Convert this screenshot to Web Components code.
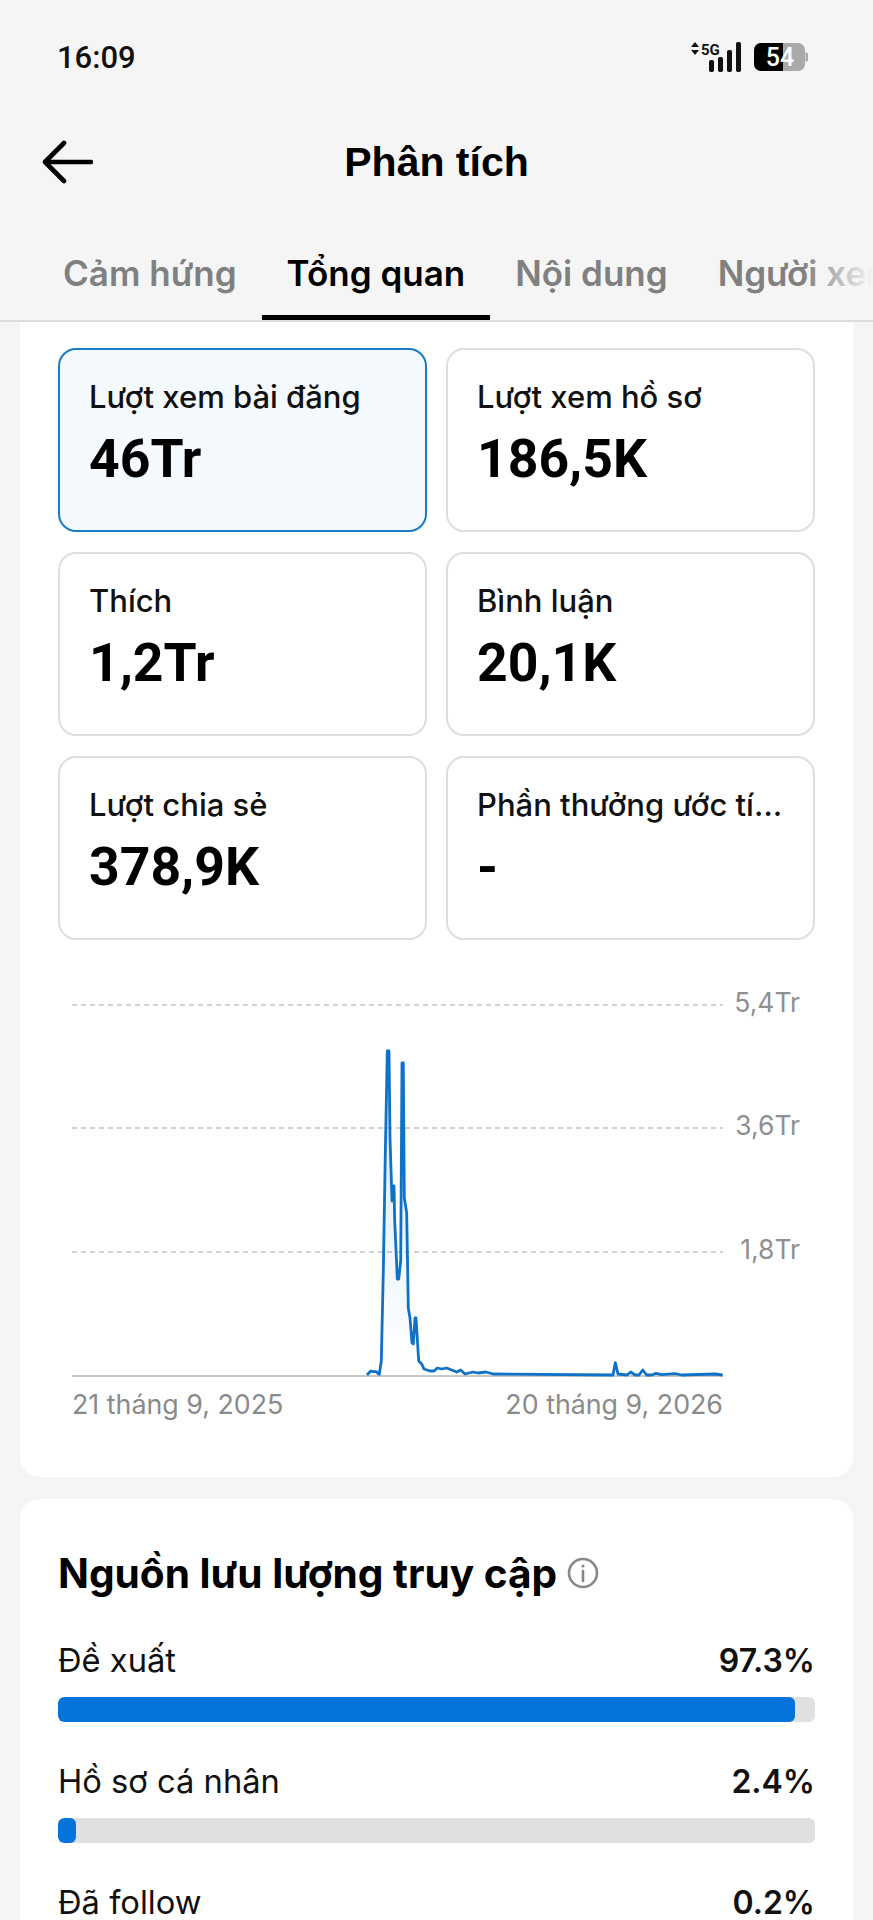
<!DOCTYPE html>
<html lang="vi">
<head>
<meta charset="utf-8">
<title>Phân tích</title>
<style>
  html, body { margin: 0; background: #f5f5f5; }
  body { height: 1920px; overflow: hidden; font-family: Inter, "Liberation Sans", sans-serif; color: #000; }
</style>
</head>
<body>
<analytics-page>
  <status-bar slot="top"></status-bar>
  <title-bar slot="top">Phân tích</title-bar>
  <tab-bar slot="top" tabs="Cảm hứng|Tổng quan|Nội dung|Người xem" active="1"></tab-bar>

  <panel-card class="first">
    <div style="display:grid;grid-template-columns:369px 369px;gap:20px 19px;padding:0 38px">
      <stat-tile label="Lượt xem bài đăng" value="46Tr" selected></stat-tile>
      <stat-tile label="Lượt xem hồ sơ" value="186,5K"></stat-tile>
      <stat-tile label="Thích" value="1,2Tr"></stat-tile>
      <stat-tile label="Bình luận" value="20,1K"></stat-tile>
      <stat-tile label="Lượt chia sẻ" value="378,9K"></stat-tile>
      <stat-tile label="Phần thưởng ước tính" value="-"></stat-tile>
    </div>
    <views-chart></views-chart>
  </panel-card>

  <panel-card>
    <traffic-list heading="Nguồn lưu lượng truy cập">
      <traffic-row label="Đề xuất" value="97.3%" fill="97.3"></traffic-row>
      <traffic-row label="Hồ sơ cá nhân" value="2.4%" fill="2.4"></traffic-row>
      <traffic-row label="Đã follow" value="0.2%" fill="0.2"></traffic-row>
    </traffic-list>
  </panel-card>
</analytics-page>

<script>
class AnalyticsPage extends HTMLElement {
  constructor() {
    super();
    this.attachShadow({ mode: 'open' }).innerHTML = `
      <style>
        :host { display: block; }
        .top { display: block; }
        .body { display: flex; flex-direction: column; gap: 22px; padding: 0 20px; }
      </style>
      <div class="top"><slot name="top"></slot></div>
      <div class="body"><slot></slot></div>`;
  }
}
customElements.define('analytics-page', AnalyticsPage);

class StatusBar extends HTMLElement {
  constructor() {
    super();
    this.attachShadow({ mode: 'open' }).innerHTML = `
      <style>
        :host { display: flex; justify-content: space-between; align-items: center; height: 114px; padding: 0 65px 0 57px; box-sizing: border-box; }
        .time { font: 500 31px/1 Roboto, "Liberation Sans", sans-serif; color: #111; }
        .right { display: flex; align-items: center; gap: 13px; }
        .battery { position: relative; width: 54px; height: 28px; }
        .level { position: absolute; inset: 0 2px 0 0; display: flex; align-items: center; justify-content: center; font: 500 25px/1 Roboto, sans-serif; color: #fff; }
      </style>
      <span class="time">16:09</span>
      <span class="right">
        <svg width="50" height="30" viewBox="0 0 50 30">
          <path d="M0 5 L4 0 L8 5Z M0 8 L8 8 L4 13Z" fill="#111"/>
          <text x="10" y="12.5" font-family="Roboto, sans-serif" font-size="15" font-weight="700" fill="#111">5G</text>
          <g fill="#111">
            <rect x="18" y="18" width="5" height="12" rx="1.8"/>
            <rect x="27" y="15" width="5" height="15" rx="1.8"/>
            <rect x="36" y="8" width="5" height="22" rx="1.8"/>
            <rect x="45" y="0" width="5" height="30" rx="1.8"/>
          </g>
        </svg>
        <span class="battery">
          <svg width="54" height="28" viewBox="0 0 54 28" style="display:block">
            <rect x="0" y="0" width="51" height="28" rx="7" fill="#a9a9a9"/>
            <path d="M7 0 H29 V28 H7 A7 7 0 0 1 0 21 V7 A7 7 0 0 1 7 0Z" fill="#000"/>
            <path d="M51.500 9 a3 5 0 0 1 0 10Z" fill="#a9a9a9"/>
          </svg>
          <span class="level">54</span>
        </span>
      </span>`;
  }
}
customElements.define('status-bar', StatusBar);

class TitleBar extends HTMLElement {
  constructor() {
    super();
    this.attachShadow({ mode: 'open' }).innerHTML = `
      <style>
        :host { display: grid; grid-template-columns: 1fr auto 1fr; align-items: center; height: 96px; padding: 0 42px; box-sizing: border-box; }
        svg { display: block; }
        h1 { margin: 0; font: 700 41px/1 "Liberation Sans", Arial, sans-serif; color: #000; }
      </style>
      <svg width="51" height="44" viewBox="0 0 51 44" fill="none" stroke="#000" stroke-width="4.6" stroke-linecap="round" stroke-linejoin="round">
        <path d="M49 22 H3 M22 3 L3 22 L22 41"/>
      </svg>
      <h1><slot></slot></h1>
      <span></span>`;
  }
}
customElements.define('title-bar', TitleBar);

class TabBar extends HTMLElement {
  constructor() {
    super();
    const names = this.getAttribute('tabs').split('|');
    const active = Number(this.getAttribute('active'));
    const items = names.map((n, i) => `<span class="tab${i === active ? ' on' : ''}">${n}</span>`).join('');
    this.attachShadow({ mode: 'open' }).innerHTML = `
      <style>
        :host { display: block; position: relative; height: 112px; box-sizing: border-box; border-bottom: 2px solid #dcdcdc; overflow: hidden; }
        .row { display: flex; height: 110px; padding-left: 38px; white-space: nowrap; align-items: flex-end; }
        .tab { font: 600 35px/1 Inter, "Liberation Sans", sans-serif; color: #808080; padding: 0 25px 32px; height: 62px; box-sizing: border-box; display: flex; align-items: center; }
        .on { color: #000; box-shadow: inset 0 -5px 0 #000; }
        .fade { position: absolute; right: 0; top: 0; bottom: 0; width: 70px; background: linear-gradient(to right, rgba(245,245,245,0), #f5f5f5); }
      </style>
      <div class="row">${items}</div>
      <div class="fade"></div>`;
  }
}
customElements.define('tab-bar', TabBar);

class PanelCard extends HTMLElement {
  constructor() {
    super();
    this.attachShadow({ mode: 'open' }).innerHTML = `
      <style>
        :host { display: block; background: #fff; border-radius: 20px; }
        :host(.first) { border-radius: 0 0 20px 20px; padding-top: 26px; padding-bottom: 0; height: 1155px; box-sizing: border-box; }
      </style>
      <slot></slot>`;
  }
}
customElements.define('panel-card', PanelCard);

class StatTile extends HTMLElement {
  constructor() {
    super();
    this.attachShadow({ mode: 'open' }).innerHTML = `
      <style>
        :host { display: block; height: 184px; box-sizing: border-box; border: 2px solid #dedede; border-radius: 18px; padding: 29px 28px 0 29px; }
        :host([selected]) { border-color: #1a7cc4; background: #f4f9fe; }
        .label { font: 500 31px/36px Inter, "Liberation Sans", sans-serif; color: #111; white-space: nowrap; overflow: hidden; text-overflow: ellipsis; }
        .value { font: 700 53.5px/60px Roboto, "Liberation Sans", sans-serif; color: #000; margin-top: 14px; }
      </style>
      <div class="label"></div>
      <div class="value"></div>`;
    this.shadowRoot.querySelector('.label').textContent = this.getAttribute('label');
    this.shadowRoot.querySelector('.value').textContent = this.getAttribute('value');
  }
}
customElements.define('stat-tile', StatTile);

class ViewsChart extends HTMLElement {
  constructor() {
    super();
    // points read off the reference, in page coordinates minus the chart origin (x-20, y-980)
    const pts = [[367,1374],[370.7,1370],[373.3,1370.7],[376,1370.7],[379.3,1373.3],[381.3,1360],[383.3,1270],[385.3,1153],[387.3,1050],[389,1050],[390,1137],[392,1200],[392.7,1185],[394,1185],[394.7,1220],[397.3,1278],[398.7,1278],[400.7,1260],[402,1062],[403.3,1062],[404.3,1197],[406.7,1212],[408.3,1307],[410,1317],[412,1342],[413.3,1343],[415,1317],[416,1317],[418.7,1360],[421.7,1363],[424,1368],[430,1370],[434,1370],[437.3,1367],[441.7,1368],[446.7,1367],[451.7,1369],[456.7,1371],[460.7,1369],[465,1373],[473,1371],[478,1372],[486,1371],[493,1373],[613,1374],[615.3,1361.7],[618,1373],[627,1374],[630.7,1371],[635,1374],[639,1374],[642.7,1369],[646.7,1374],[652,1374],[656,1372.3],[661.7,1373.7],[675,1372.7],[681.7,1374],[715,1373],[722.7,1374]]
      .map(([x, y]) => [x - 20, y - 980]);
    const line = pts.map(p => p.join(',')).join(' ');
    const area = `${pts[0][0]},395 ${line} ${pts[pts.length - 1][0]},395`;
    const grid = [[24, '5,4Tr'], [147, '3,6Tr'], [271, '1,8Tr']].map(([y, t]) => `
      <line x1="52" x2="703" y1="${y}" y2="${y}" stroke="#c4c4c4" stroke-width="1.5" stroke-dasharray="5 4"/>
      <text x="780" y="${y + 7}" text-anchor="end" font-size="26.5" fill="#8f8f8f">${t}</text>`).join('');
    this.attachShadow({ mode: 'open' }).innerHTML = `
      <style>
        :host { display: block; margin-top: 41px; font-family: Inter, "Liberation Sans", sans-serif; }
        svg { display: block; font-family: Inter, "Liberation Sans", sans-serif; }
        .dates { display: flex; justify-content: space-between; width: 651px; margin: 10px 0 0 52px; font-size: 26.8px; line-height: 32px; color: #8a8a8a; }
      </style>
      <svg width="833" height="397" viewBox="0 0 833 397">
        <defs><linearGradient id="g" x1="0" y1="0" x2="0" y2="1">
          <stop offset="0" stop-color="#0f78d2" stop-opacity=".16"/>
          <stop offset="1" stop-color="#0f78d2" stop-opacity="0"/>
        </linearGradient></defs>
        ${grid}
        <line x1="52" x2="703" y1="395" y2="395" stroke="#c8c8c8" stroke-width="2"/>
        <polygon points="${area}" fill="url(#g)"/>
        <polyline points="${line}" fill="none" stroke="#0f72c6" stroke-width="2.8" stroke-linejoin="round"/>
      </svg>
      <div class="dates"><span>21 tháng 9, 2025</span><span>20 tháng 9, 2026</span></div>`;
  }
}
customElements.define('views-chart', ViewsChart);

class TrafficList extends HTMLElement {
  constructor() {
    super();
    this.attachShadow({ mode: 'open' }).innerHTML = `
      <style>
        :host { display: block; padding: 46px 38px 0; }
        h2 { display: flex; align-items: center; gap: 10px; margin: 0 0 37px; font: 700 40.6px/58px Inter, "Liberation Sans", sans-serif; color: #000; }
        svg { display: block; margin-top: -3px; }
        .rows { display: flex; flex-direction: column; gap: 39.5px; }
      </style>
      <h2><span></span>
        <svg width="32" height="32" viewBox="0 0 32 32" fill="none" stroke="#888" stroke-width="2.6">
          <circle cx="16" cy="16" r="14"/>
          <path d="M16 14 V24" stroke-linecap="round"/>
          <circle cx="16" cy="9" r="1.6" fill="#888" stroke="none"/>
        </svg>
      </h2>
      <div class="rows"><slot></slot></div>`;
    this.shadowRoot.querySelector('h2 span').textContent = this.getAttribute('heading');
  }
}
customElements.define('traffic-list', TrafficList);

class TrafficRow extends HTMLElement {
  constructor() {
    super();
    this.attachShadow({ mode: 'open' }).innerHTML = `
      <style>
        :host { display: block; font-family: Inter, "Liberation Sans", sans-serif; }
        .head { display: flex; justify-content: space-between; align-items: center; height: 40px; margin-bottom: 16.500px; }
        .label { font-size: 32.7px; font-weight: 400; color: #111; }
        .value { font-size: 32px; font-weight: 600; color: #111; }
        .track { height: 25px; border-radius: 6px; background: #e0e0e0; overflow: hidden; }
        .fill { height: 100%; min-width: 18px; border-radius: 6px; background: #0474dc; }
      </style>
      <div class="head"><span class="label"></span><span class="value"></span></div>
      <div class="track"><div class="fill"></div></div>`;
    this.shadowRoot.querySelector('.label').textContent = this.getAttribute('label');
    this.shadowRoot.querySelector('.value').textContent = this.getAttribute('value');
    this.shadowRoot.querySelector('.fill').style.width = this.getAttribute('fill') + '%';
  }
}
customElements.define('traffic-row', TrafficRow);
</script>
</body>
</html>
